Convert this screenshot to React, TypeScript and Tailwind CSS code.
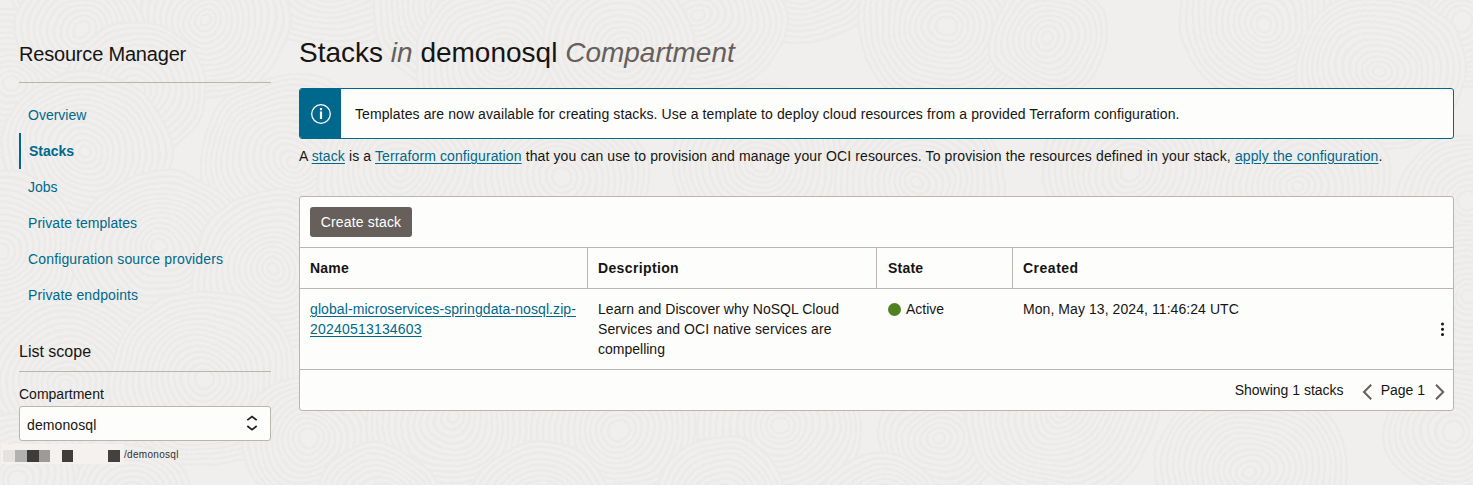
import React from "react";

const ripples: [number, number, number][] = [
  [90, -40, 88], [330, -30, 84], [560, -36, 90], [800, -40, 88], [1050, -75, 90], [1290, -50, 86],
  [205, 20, 84], [450, 10, 80], [700, 15, 84], [945, 25, 88], [1265, 20, 86], [1460, 25, 70],
  [10, 85, 80], [80, 30, 62], [135, 90, 70], [500, 60, 84], [620, 45, 76], [1050, 40, 60], [1380, 70, 84],
  [85, 150, 84], [290, 160, 90], [400, 170, 84], [560, 180, 88], [760, 165, 86], [920, 185, 84], [1130, 170, 88], [1300, 185, 90], [1468, 200, 70],
  [0, 250, 80], [160, 250, 86], [275, 270, 84], [1470, 300, 80],
  [67, 383, 90], [203, 380, 94], [310, 440, 70], [450, 420, 84], [620, 430, 88], [780, 425, 82],
  [940, 440, 60], [1060, 410, 96], [1250, 470, 96], [1450, 430, 64],
  [20, 480, 70], [130, 500, 60], [380, 500, 60], [540, 505, 70], [720, 500, 66], [880, 510, 60],
];

function Texture() {
  return (
    <svg className="absolute inset-0 h-full w-full" viewBox="0 0 1473 485" aria-hidden="true">
      <filter id="organic" x="0" y="0" width="1473" height="485" filterUnits="userSpaceOnUse" colorInterpolationFilters="sRGB">
        <feTurbulence type="fractalNoise" baseFrequency="0.014" numOctaves="2" seed="4" result="noise" />
        <feDisplacementMap in="SourceGraphic" in2="noise" scale="16" xChannelSelector="R" yChannelSelector="G" />
        <feGaussianBlur stdDeviation="0.7" />
      </filter>
      <g filter="url(#organic)">
        <rect x="-60" y="-60" width="1600" height="620" fill="#f0efed" />
        {ripples.map(([cx, cy, r], i) => (
          <g key={i} fill="#f0efed" stroke="#ebeae8" strokeWidth="2.4">
            {Array.from({ length: Math.floor(r / 6) }, (_, n) => (
              <ellipse key={n} cx={cx} cy={cy} rx={r - n * 6} ry={(r - n * 6) * 0.94} />
            ))}
          </g>
        ))}
      </g>
    </svg>
  );
}

const navItems = [
  { label: "Overview", tracking: "" },
  { label: "Stacks", tracking: "" },
  { label: "Jobs", tracking: "" },
  { label: "Private templates", tracking: "tracking-[0.06px]" },
  { label: "Configuration source providers", tracking: "tracking-[0.15px]" },
  { label: "Private endpoints", tracking: "tracking-[0.12px]" },
];

function Sidebar() {
  return (
    <aside className="w-[252px] shrink-0">
      <h2 className="flex h-[83px] items-end border-b border-[#bab5ad] pb-[16px] text-[20px] leading-6 tracking-[-0.19px]">Resource Manager</h2>
      <nav className="mt-[14px]">
        {navItems.map(({ label, tracking }) => (
          <a
            key={label}
            className={
              (label === "Stacks"
                ? "flex h-9 items-center border-l-2 border-[#00688c] pl-2 font-bold text-[#00688c] "
                : "flex h-9 items-center pl-[9px] text-[#00688c] ") + tracking
            }
          >
            {label}
          </a>
        ))}
      </nav>
      <h3 className="mt-[29px] flex h-[30px] items-start border-b border-[#bab5b0] text-[16px] leading-5">List scope</h3>
      <div className="mt-[12px] leading-5">Compartment</div>
      <div className="mt-[2px] flex h-[35px] items-center justify-between rounded-[3px] border border-[#bab5ad] bg-[#fdfdfb] pr-[12px] pl-[7px] pt-[4px]">
        <span className="tracking-[0.1px]">demonosql</span>
        <svg className="-mt-[5px]" width="12" height="16" viewBox="0 0 12 16" fill="none" stroke="#201e1c" strokeWidth="1.7">
          <path d="M1.3 5.2 6 1.5l4.700 3.700M1.300 11 6 14.700 10.700 11" />
        </svg>
      </div>
      <div className="mt-[3px] -ml-[18px] flex h-5 items-center text-[10px] text-[#33302e]">
        <div className="flex h-5 w-[123px] items-center bg-[#f5f1ee] pt-1 pl-[2px]">
          <i className="h-3 w-3 bg-[#e6e2df]" />
          <i className="h-3 w-3 bg-[#b3b1af]" />
          <i className="h-3 w-3 bg-[#3d3c3a]" />
          <i className="h-3 w-[11px] bg-[#9e9a97]" />
          <i className="ml-3 h-3 w-[11px] bg-[#3f3e3b]" />
          <i className="ml-[35px] h-3 w-3 bg-[#42413d]" />
        </div>
        <span className="tracking-[0.3px]">/demonosql</span>
      </div>
    </aside>
  );
}

const link = "text-[#00688c] underline underline-offset-2";

function StackTable() {
  return (
    <section className="mt-[30px] h-[215px] rounded-[3px] border border-[#bab5b0] bg-[#fdfdfb]">
      <div className="flex h-[50px] items-center pl-[10px]">
        <button className="h-[30px] w-[102px] rounded-[3px] bg-[#665f5b] tracking-[0.15px] text-white">Create stack</button>
      </div>
      <div className="grid h-[42px] grid-cols-[288px_289px_136px_1fr] border-y border-[#bab5b0] font-bold">
        <div className="flex items-center border-r border-[#bab5b0] pl-[10px] tracking-[0.2px]">Name</div>
        <div className="flex items-center border-r border-[#bab5b0] pl-[10px] tracking-[0.36px]">Description</div>
        <div className="flex items-center border-r border-[#bab5b0] pl-[11px] tracking-[0.2px]">State</div>
        <div className="flex items-center pl-[10px] tracking-[0.5px]">Created</div>
      </div>
      <div className="grid h-[81px] grid-cols-[288px_289px_136px_1fr] border-b border-[#bab5b0] pt-[10px] leading-5">
        <div className="pl-[10px]">
          <a className={link}>
            <span className="tracking-[0.09px]">global-microservices-springdata-nosql.zip-</span>
            <br />
            <span className="tracking-[0.2px]">20240513134603</span>
          </a>
        </div>
        <div className="pl-[10px]">
          <span className="tracking-[0.03px]">Learn and Discover why NoSQL Cloud</span>
          <br />
          <span className="tracking-[0.09px]">Services and OCI native services are</span>
          <br />
          compelling
        </div>
        <div className="flex h-5 items-center pl-[11px]">
          <span className="mt-[1px] mr-[5px] h-[13px] w-[13px] rounded-full bg-[#508223]" />
          Active
        </div>
        <div className="flex justify-between pl-[10px]">
          <span className="tracking-[0.07px]">Mon, May 13, 2024, 11:46:24 UTC</span>
          <svg className="mt-[23px] mr-[8px]" width="5" height="15" viewBox="0 0 5 15" fill="#161513">
            <circle cx="2.500" cy="2" r="1.500" />
            <circle cx="2.500" cy="7.300" r="1.500" />
            <circle cx="2.500" cy="12.600" r="1.500" />
          </svg>
        </div>
      </div>
      <div className="flex h-10 items-center justify-end pr-[8px]">
        <span className="mr-[18px]">Showing 1 stacks</span>
        <svg className="mt-[3px] mr-[9px]" width="10" height="16" viewBox="0 0 10 16" fill="none" stroke="#665f5b" strokeWidth="2">
          <path d="M9.200 .8 2 8 9.200 15.200" />
        </svg>
        <span className="mr-[10px]">Page 1</span>
        <svg className="mt-[3px]" width="10" height="16" viewBox="0 0 10 16" fill="none" stroke="#665f5b" strokeWidth="2">
          <path d="M1 .8 8.200 8 1 15.200" />
        </svg>
      </div>
    </section>
  );
}

export default function App() {
  return (
    <div className="relative h-[485px] w-[1473px] overflow-hidden bg-[#f0efed] font-['Liberation_Sans',Arial,sans-serif] text-[14px] text-[#161513]">
      <Texture />
      <div className="relative flex gap-7 pl-[19px]">
        <Sidebar />
        <main className="w-[1155px]">
          <h1 className="mt-[35px] text-[28px] leading-9">
            Stacks <em className="text-[#665f5b]">in</em> demonosql <em className="text-[#665f5b]">Compartment</em>
          </h1>
          <div className="mt-[17px] flex h-[51px] overflow-hidden rounded-[3px] border border-[#00688c] bg-[#fdfdfb]">
            <div className="flex w-[41px] items-center justify-center bg-[#00688c]">
              <svg width="20" height="20" viewBox="0 0 20 20" fill="none">
                <circle cx="10" cy="10" r="9.300" stroke="white" strokeWidth="1.300" />
                <path d="M8.900 4h2.200v2.200H8.900zM8.900 7.500h2.200v7.500H8.900z" fill="white" />
              </svg>
            </div>
            <p className="flex items-center pt-[2px] pl-[14px] tracking-[0.095px]">Templates are now available for creating stacks. Use a template to deploy cloud resources from a provided Terraform configuration.</p>
          </div>
          <p className="mt-[7px] leading-5 tracking-[0.117px]">
            A <a className={link}>stack</a> is a <a className={link}>Terraform configuration</a> that you can use to provision and manage your OCI resources. To provision the resources defined in your stack, <a className={link}>apply the configuration</a>.
          </p>
          <StackTable />
        </main>
      </div>
    </div>
  );
}
